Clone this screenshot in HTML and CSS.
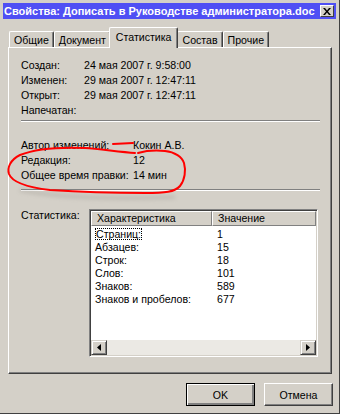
FILE: index.html
```html
<!DOCTYPE html>
<html lang="ru">
<head>
    <meta charset="UTF-8">
    <title>Свойства</title>
    <link rel="stylesheet" href="styles.css">
</head>
<body>

    <div class="window">
        <div class="titlebar">
            <span class="title">Свойства: Дописать в Руководстве администратора.doc</span>
            <span class="close">
                <svg width="8" height="7" viewBox="0 0 8 7"><path d="M0 0h2l2 2.5L6 0h2L5 3.5 8 7H6L4 4.5 2 7H0l3-3.5z" fill="#000"/></svg>
            </span>
        </div>

        <div class="tabs">
            <div class="tab">Общие</div>
            <div class="tab">Документ</div>
            <div class="tab active">Статистика</div>
            <div class="tab">Состав</div>
            <div class="tab">Прочие</div>
        </div>

        <div class="panel">
            <div class="group dates">
                <div class="row"><span class="label">Создан:</span><span>24 мая 2007 г. 9:58:00</span></div>
                <div class="row"><span class="label">Изменен:</span><span>29 мая 2007 г. 12:47:11</span></div>
                <div class="row"><span class="label">Открыт:</span><span>29 мая 2007 г. 12:47:11</span></div>
                <div class="row"><span class="label">Напечатан:</span><span></span></div>
            </div>
            <div class="sep"></div>

            <div class="group edits">
                <div class="row"><span class="label">Автор изменений:</span><span>Кокин А.В.</span></div>
                <div class="row"><span class="label">Редакция:</span><span>12</span></div>
                <div class="row"><span class="label">Общее время правки:</span><span>14 мин</span></div>
            </div>
            <div class="sep sep-second"></div>

            <div class="stats">
                <span class="stats-label">Статистика:</span>
                <div class="listbox">
                    <div class="list-head">
                        <div class="col-head first">Характеристика</div>
                        <div class="col-head second">Значение</div>
                    </div>
                    <div class="list-body">
                        <div class="item"><span class="c1"><span class="focus">Страниц:</span></span><span class="c2">1</span></div>
                        <div class="item"><span class="c1">Абзацев:</span><span class="c2">15</span></div>
                        <div class="item"><span class="c1">Строк:</span><span class="c2">18</span></div>
                        <div class="item"><span class="c1">Слов:</span><span class="c2">101</span></div>
                        <div class="item"><span class="c1">Знаков:</span><span class="c2">589</span></div>
                        <div class="item"><span class="c1">Знаков и пробелов:</span><span class="c2">677</span></div>
                    </div>
                    <div class="hscroll">
                        <div class="sbtn">
                            <svg width="4" height="7" viewBox="0 0 4 7"><path d="M4 0v7L0 3.5z" fill="#000"/></svg>
                        </div>
                        <div class="track"></div>
                        <div class="sbtn">
                            <svg width="4" height="7" viewBox="0 0 4 7"><path d="M0 0v7l4-3.5z" fill="#000"/></svg>
                        </div>
                    </div>
                </div>
            </div>
        </div>

        <div class="buttons">
            <button class="btn default">OK</button>
            <button class="btn">Отмена</button>
        </div>

        <!-- hand-drawn annotation on top of the screenshot -->
        <svg class="marks" width="340" height="414" viewBox="0 0 340 414">
            <path class="shadow" d="M20 190 C60 198 120 199 175 197"/>
            <path class="ink" d="M113 144 L133 143"/>
            <path class="ink" d="M135 153 C120 152 100 149 85 148 C60 147 35 149 20 155 C10 160 7 168 9 174 C12 182 25 187 50 190 C80 192 120 193 145 193 C165 193 175 192 180 186 C185 180 186 170 184 163 C182 157 175 152 165 151 C155 150 145 151 138 153"/>
        </svg>
    </div>

</body>
</html>
```

FILE: styles.css
```css
body {
    margin: 0;
    font-family: "Liberation Sans", Arial, sans-serif;
    font-size: 10.6px;
    color: #000;
    background-color: #d4d0c8;
}

.window {
    position: relative;
    width: 340px;
    height: 414px;
    box-sizing: border-box;
    padding: 3px;
    background-color: #d4d0c8;
    border-right: 1px solid #404040;
    border-bottom: 1px solid #404040;
    overflow: hidden;
}

.titlebar {
    height: 16px;
    background-color: #4f4ff4;
    display: flex;
    align-items: center;
    justify-content: space-between;
    padding: 0 2px 0 1px;
}

.title {
    color: #fff;
    font-weight: bold;
    font-size: 11px;
    white-space: nowrap;
}

.close {
    width: 14px;
    height: 12px;
    box-sizing: border-box;
    background-color: #d4d0c8;
    border: 1px solid;
    border-color: #fff #404040 #404040 #fff;
    display: flex;
    align-items: center;
    justify-content: center;
}

.tabs {
    display: flex;
    align-items: flex-end;
    margin: 8px 0 0 6px;
    height: 20px;
}

.tab {
    height: 16px;
    box-sizing: border-box;
    padding: 2px 4px 0 4px;
    border: 1px solid;
    border-color: #fff #404040 transparent #fff;
    border-bottom: none;
    box-shadow: inset -1px 0 0 #808080;
    border-radius: 2px 2px 0 0;
    line-height: 13px;
    white-space: nowrap;
}

.tab.active {
    height: 21px;
    margin: 0 -1px -1px -2px;
    padding: 3px 6px 0 6px;
    position: relative;
    z-index: 1;
    background-color: #d4d0c8;
}

.panel {
    margin-left: 5px;
    width: 324px;
    height: 327px;
    box-sizing: border-box;
    border: 1px solid;
    border-color: #fff #404040 #404040 #fff;
    box-shadow: inset -1px -1px 0 #808080;
    padding: 10px 12px 0 12px;
}

.row {
    display: flex;
    height: 15px;
    line-height: 15px;
    white-space: nowrap;
}

.dates .label {
    width: 63px;
}

.edits .label {
    width: 112px;
}

.sep {
    height: 0;
    border-top: 1px solid #808080;
    border-bottom: 1px solid #fff;
    margin: 2px 0 16px 0;
    width: 299px;
}

.sep-second {
    margin: 6px 0 18px 0;
}

.stats {
    display: flex;
}

.stats-label {
    width: 68px;
    line-height: 13px;
}

.listbox {
    width: 229px;
    height: 148px;
    box-sizing: border-box;
    border: 1px solid;
    border-color: #808080 #fff #fff #808080;
    box-shadow: inset 1px 1px 0 #404040, inset -1px -1px 0 #d4d0c8;
    background-color: #fff;
    padding: 1px;
    display: flex;
    flex-direction: column;
}

.list-head {
    display: flex;
    height: 15px;
    flex: none;
}

.col-head {
    box-sizing: border-box;
    background-color: #d4d0c8;
    border: 1px solid;
    border-color: #fff #808080 #808080 #fff;
    padding-left: 5px;
    line-height: 13px;
}

.col-head.first {
    width: 121px;
}

.col-head.second {
    flex: 1;
}

.list-body {
    flex: 1;
    padding-top: 2px;
}

.item {
    display: flex;
    height: 13px;
    line-height: 13px;
    white-space: nowrap;
}

.c1 {
    width: 121px;
    padding-left: 4px;
    box-sizing: border-box;
}

.c2 {
    padding-left: 5px;
}

.focus {
    outline: 1px dotted #000;
    outline-offset: -1px;
    padding: 0 1px;
}

.hscroll {
    display: flex;
    height: 15px;
    flex: none;
}

.sbtn {
    width: 16px;
    box-sizing: border-box;
    background-color: #d4d0c8;
    border: 1px solid;
    border-color: #d4d0c8 #404040 #404040 #d4d0c8;
    box-shadow: inset 1px 1px 0 #fff, inset -1px -1px 0 #808080;
    display: flex;
    align-items: center;
    justify-content: center;
}

.track {
    flex: 1;
    background-color: #ebe9e4;
}

.buttons {
    display: flex;
    justify-content: flex-end;
    gap: 9px;
    margin: 9px 3px 0 0;
}

.btn {
    width: 69px;
    height: 23px;
    box-sizing: border-box;
    background-color: #d4d0c8;
    font-family: "Liberation Sans", Arial, sans-serif;
    font-size: 10.6px;
    color: #000;
    border: 1px solid;
    border-color: #fff #404040 #404040 #fff;
    box-shadow: inset -1px -1px 0 #808080;
    padding: 0;
}

.btn.default {
    border: 1px solid #000;
    box-shadow: inset 1px 1px 0 #fff, inset -2px -2px 0 #808080;
}

.marks {
    position: absolute;
    left: 0;
    top: 0;
    pointer-events: none;
}

.marks .ink {
    fill: none;
    stroke: #f00;
    stroke-width: 2;
    stroke-linecap: round;
    stroke-linejoin: round;
}

.marks .shadow {
    fill: none;
    stroke: #8a8780;
    stroke-width: 3;
    opacity: 0.35;
    filter: blur(2px);
}
```
